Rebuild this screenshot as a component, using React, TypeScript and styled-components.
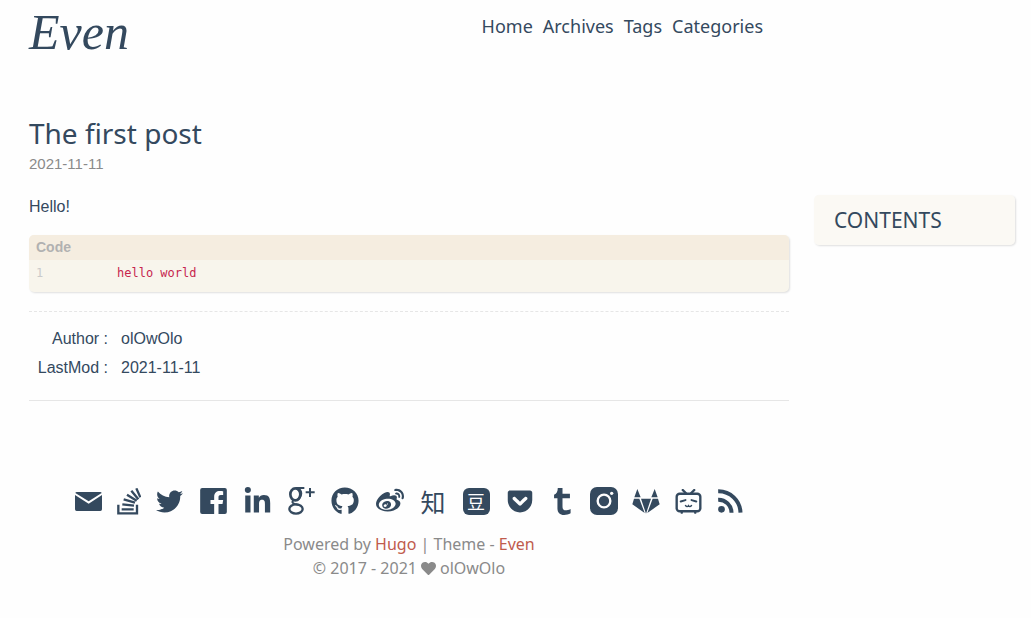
import React from 'react';
import styled, { createGlobalStyle } from 'styled-components';
import { FaTwitter, FaLinkedinIn, FaGithub, FaWeibo, FaGetPocket, FaHeart } from 'react-icons/fa';

const ink = '#34495e';
const muted = '#8a8a8a';
const accent = '#c05b4d';
const ui = '"Segoe UI", "Noto Sans", "Open Sans", sans-serif';
const arial = '"Liberation Sans", Arial, sans-serif';

const GlobalStyle = createGlobalStyle`
  *, *::before, *::after { box-sizing: border-box; }
  body {
    margin: 0;
    background: #fefefe;
    color: ${ink};
    font: 16px/24px ${arial};
  }
  a { color: inherit; text-decoration: none; }
  h1, h2, p, dl, dd, ul, pre, figure { margin: 0; padding: 0; }
`;

const Page = styled.div`
  display: grid;
  grid-template-columns: minmax(0, 1fr) 201px;
  column-gap: 25px;
  padding: 0 16px 36px 29px;
`;

const Header = styled.header`
  grid-column: 1;
  display: flex;
  justify-content: space-between;
  align-items: flex-start;
  height: 115px;
  padding-right: 26px;
`;

const Logo = styled.a`
  padding-top: 8px;
  font: italic 50px/48px "Apple Chancery", "URW Chancery L", "Z003", "Liberation Serif", serif;
`;

const Nav = styled.nav`
  display: flex;
  gap: 10px;
  padding-top: 14px;
  font: 18px/24px ${ui};
`;

const Article = styled.article`
  grid-column: 1;
`;

const Title = styled.h1`
  font: 400 28px/36px ${ui};
`;

const PostDate = styled.time`
  display: block;
  color: ${muted};
  font-size: 15px;
  line-height: 26px;
`;

const Paragraph = styled.p`
  margin-top: 18px;
`;

const CodeBlock = styled.figure`
  margin-top: 16px;
  border-radius: 5px;
  overflow: hidden;
  background: #f8f5ec;
  box-shadow: 1px 1px 2px rgba(0, 0, 0, 0.125);
`;

const CodeTitle = styled.figcaption`
  padding: 0 7px;
  background: #f5ede0;
  color: #b1b1b1;
  font-size: 14px;
  font-weight: 700;
  line-height: 25px;
`;

const CodeRow = styled.div`
  display: grid;
  grid-template-columns: 81px 1fr;
  padding: 3px 7px 9px;
  font: 12px/20px "DejaVu Sans Mono", monospace;
`;

const LineNumber = styled.span`
  color: #cacaca;
`;

const Code = styled.code`
  color: #c7254e;
  font: inherit;
`;

const Meta = styled.dl`
  display: grid;
  grid-template-columns: 79px 1fr;
  column-gap: 13px;
  margin-top: 19px;
  padding: 12px 0 18px;
  border-top: 1px dashed #e6e6e6;
  border-bottom: 1px solid #e6e6e6;
  line-height: 29px;
  dt { text-align: right; }
`;

const Toc = styled.aside`
  grid-column: 2;
  align-self: start;
  margin-top: 80px;
  padding: 10px 20px;
  border-radius: 5px;
  background: rgba(248, 245, 236, 0.6);
  box-shadow: 1px 1px 2px rgba(0, 0, 0, 0.125);
`;

const TocTitle = styled.h2`
  font: 400 21px/30px ${ui};
`;

const Footer = styled.footer`
  grid-column: 1;
  padding-top: 85px;
  color: ${muted};
  font: 16px/24px ${ui};
  text-align: center;
`;

const Socials = styled.ul`
  display: flex;
  justify-content: center;
  gap: 16px;
  margin-bottom: 16px;
  list-style: none;
  color: ${ink};
`;

const SocialLink = styled.a<{ $width: number }>`
  display: flex;
  align-items: center;
  justify-content: center;
  width: ${(p) => p.$width}px;
  height: 30px;
  svg { display: block; flex: none; }
`;

const Hanzi = styled.span`
  font: 25px/30px "Noto Sans CJK SC", sans-serif;
`;

const HanziBadge = styled.span`
  width: 27px;
  height: 27px;
  border-radius: 6px;
  background: ${ink};
  color: #fefefe;
  font: 18px/26px "Noto Sans CJK SC", sans-serif;
  text-align: center;
`;

const Accent = styled.a`
  && { color: ${accent}; }
`;

const Copyright = styled.p`
  display: flex;
  align-items: center;
  justify-content: center;
  gap: 4px;
`;

const MailIcon = () => (
  <svg width="27" height="19" viewBox="0 0 81 57" fill="currentColor">
    <path d="M5 0H76Q79 0 80 3L41 28L1 3Q2 0 5 0Z" />
    <path d="M0 9L41 35L81 9V52Q81 57 76 57H5Q0 57 0 52Z" />
  </svg>
);

const StackOverflowIcon = () => (
  <svg width="24" height="27" viewBox="0 0 72 81" fill="none" stroke="currentColor" strokeWidth="7">
    <path d="M4 50V76H60V50" />
    <path d="M14 64H50M16 49L51 53M20 34L54 44M30 20L59 38M43 8L64 34M58 1L70 28" />
  </svg>
);

const FacebookIcon = () => (
  <svg width="27" height="26" viewBox="0 0 80 78" fill="currentColor">
    <path d="M6 0H74Q80 0 80 6V72Q80 78 74 78H55V48H67L69 36H55V28C55 23 57 21 62 21H69V10C67 9 63 9 59 9C49 9 42 15 42 26V36H31V48H42V78H6Q0 78 0 72V6Q0 0 6 0Z" />
  </svg>
);

const GooglePlusIcon = () => (
  <svg width="27" height="28" viewBox="0 0 81 84" fill="none" stroke="currentColor">
    <ellipse cx="22" cy="22" rx="15" ry="18" strokeWidth="8" />
    <path d="M24 3H49M33 5Q42 14 39 24Q37 32 30 38M17 39Q8 47 20 51L34 54" strokeWidth="6" />
    <ellipse cx="24" cy="66" rx="20" ry="14" strokeWidth="7" />
    <path d="M66 3V30M53 16H80" strokeWidth="6" />
  </svg>
);

const TumblrIcon = () => (
  <svg width="17" height="27" viewBox="0 0 50 80" fill="currentColor">
    <path d="M11 0H25V17H47V30H25V54C25 63 28 66 34 66C39 66 43 65 49 62V75C43 79 37 80 30 80C17 80 10 73 10 60V30H0V20C8 17 11 10 11 0Z" />
  </svg>
);

const InstagramIcon = () => (
  <svg width="28" height="28" viewBox="0 0 84 84" fill="currentColor">
    <rect width="84" height="84" rx="21" />
    <circle cx="42" cy="42" r="19" fill="none" stroke="#fefefe" strokeWidth="7" />
    <circle cx="65" cy="19" r="5" fill="#fefefe" />
  </svg>
);

const GitlabIcon = () => (
  <svg width="28" height="25" viewBox="0 0 84 75" fill="currentColor">
    <path d="M16 0L26 25H7ZM68 0L77 25H58ZM27 29H57L42 74ZM6 29H22L38 72L1 46ZM78 29H62L46 72L83 46Z" />
  </svg>
);

const BilibiliIcon = () => (
  <svg width="27" height="25" viewBox="0 0 78 74" fill="none" stroke="currentColor" strokeWidth="7" strokeLinecap="round">
    <rect x="4" y="14" width="70" height="52" rx="9" />
    <path d="M31 12L22 3M47 12L56 3M19 69V70M59 69V70" />
    <path d="M16 37L30 33M48 33L62 37" strokeWidth="6" />
    <path d="M30 49Q35 55 39 49Q43 55 48 49" strokeWidth="4" />
  </svg>
);

const RssIcon = () => (
  <svg width="25" height="24" viewBox="0 0 74 72" fill="none" stroke="currentColor" strokeWidth="12">
    <circle cx="10" cy="61" r="10" fill="currentColor" stroke="none" />
    <path d="M0 32A39 39 0 0 1 40 71M0 7A66 66 0 0 1 67 71" />
  </svg>
);

const socials: { name: string; width: number; icon: React.ReactNode }[] = [
  { name: 'Email', width: 27, icon: <MailIcon /> },
  { name: 'Stack Overflow', width: 22, icon: <StackOverflowIcon /> },
  { name: 'Twitter', width: 27, icon: <FaTwitter size={27} /> },
  { name: 'Facebook', width: 28, icon: <FacebookIcon /> },
  { name: 'LinkedIn', width: 28, icon: <FaLinkedinIn size={29} /> },
  { name: 'Google Plus', width: 28, icon: <GooglePlusIcon /> },
  { name: 'GitHub', width: 28, icon: <FaGithub size={28} /> },
  { name: 'Weibo', width: 29, icon: <FaWeibo size={28} /> },
  { name: 'Zhihu', width: 26, icon: <Hanzi>知</Hanzi> },
  { name: 'Douban', width: 28, icon: <HanziBadge>豆</HanziBadge> },
  { name: 'Pocket', width: 28, icon: <FaGetPocket size={28} /> },
  { name: 'Tumblr', width: 24, icon: <TumblrIcon /> },
  { name: 'Instagram', width: 27, icon: <InstagramIcon /> },
  { name: 'GitLab', width: 26, icon: <GitlabIcon /> },
  { name: 'Bilibili', width: 26, icon: <BilibiliIcon /> },
  { name: 'RSS', width: 26, icon: <RssIcon /> },
];

export default function App() {
  return (
    <>
      <GlobalStyle />
      <Page>
        <Header>
          <Logo href="#">Even</Logo>
          <Nav>
            {['Home', 'Archives', 'Tags', 'Categories'].map((item) => (
              <a key={item} href="#">{item}</a>
            ))}
          </Nav>
        </Header>
        <Article>
          <Title>The first post</Title>
          <PostDate>2021-11-11</PostDate>
          <Paragraph>Hello!</Paragraph>
          <CodeBlock>
            <CodeTitle>Code</CodeTitle>
            <CodeRow>
              <LineNumber>1</LineNumber>
              <Code>hello world</Code>
            </CodeRow>
          </CodeBlock>
          <Meta>
            <dt>Author :</dt>
            <dd>olOwOlo</dd>
            <dt>LastMod :</dt>
            <dd>2021-11-11</dd>
          </Meta>
        </Article>
        <Toc>
          <TocTitle>CONTENTS</TocTitle>
        </Toc>
        <Footer>
          <Socials>
            {socials.map(({ name, width, icon }) => (
              <li key={name}>
                <SocialLink href="#" aria-label={name} $width={width}>{icon}</SocialLink>
              </li>
            ))}
          </Socials>
          <p>
            Powered by <Accent href="#">Hugo</Accent> | Theme - <Accent href="#">Even</Accent>
          </p>
          <Copyright>
            <span>© 2017 - 2021</span>
            <FaHeart size={15} />
            <span>olOwOlo</span>
          </Copyright>
        </Footer>
      </Page>
    </>
  );
}
